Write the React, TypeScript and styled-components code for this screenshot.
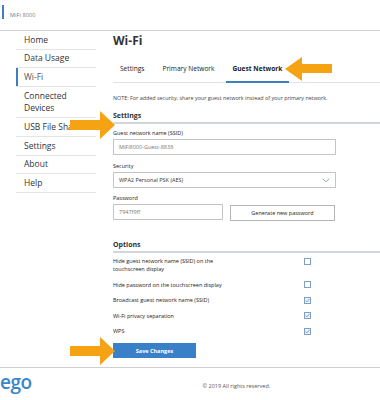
import React from 'react';
import styled, { createGlobalStyle } from 'styled-components';

const GlobalStyle = createGlobalStyle`
  html, body {
    margin: 0;
    padding: 0;
    background: #ffffff;
  }
  body {
    font-family: "Open Sans", "Liberation Sans", sans-serif;
    color: #333;
  }
`;

const Page = styled.div`
  position: relative;
  width: 380px;
  height: 400px;
  overflow: hidden;
`;

const TopBar = styled.div`
  height: 31px;
  box-sizing: border-box;
  border-bottom: 1px solid #d2d2d2;
  display: flex;
  align-items: flex-start;
  padding: 5px 0 0 2px;
`;

const BrandMark = styled.div`
  width: 2px;
  height: 14px;
  background: #3d7fc1;
`;

const BrandText = styled.div`
  margin: 7px 0 0 6px;
  font-size: 5.5px;
  line-height: 6px;
  color: #777;
  letter-spacing: 0.1px;
`;

const Body = styled.div`
  display: flex;
  align-items: flex-start;
`;

const SideNav = styled.nav`
  margin-left: 16px;
  width: 80px;
  flex-shrink: 0;
`;

const NavItem = styled.div<{ $active?: boolean }>`
  padding: 2.55px 0 2.55px 8px;
  font-size: 8.5px;
  line-height: 12.6px;
  color: ${(p) => (p.$active ? '#555' : '#333')};
  border-bottom: 1px solid #e4e4e4;
  box-shadow: ${(p) => (p.$active ? 'inset 2px 0 0 #3d7fc1' : 'none')};
`;

const Main = styled.main`
  margin-left: 17px;
  flex: 1;
  min-width: 0;
`;

const Title = styled.h1`
  margin: 3px 0 0;
  font-size: 12px;
  line-height: 14px;
  font-weight: 700;
  color: #333;
`;

const Tabs = styled.div`
  margin-top: 7px;
  height: 28px;
  box-sizing: border-box;
  display: flex;
  gap: 4px;
  border-bottom: 1px solid #e2e2e2;
`;

const Tab = styled.div<{ $active?: boolean }>`
  display: flex;
  align-items: center;
  padding: 1px 7px 0;
  font-size: 6.6px;
  font-weight: ${(p) => (p.$active ? 700 : 400)};
  color: #222;
  border-bottom: 2px solid ${(p) => (p.$active ? '#3d7fc1' : 'transparent')};
  margin-bottom: -1px;
`;

const Note = styled.p`
  margin: 11px 0 0;
  font-size: 5.4px;
  line-height: 8px;
  color: #444;
  white-space: nowrap;
`;

const SectionHead = styled.h2<{ $gap: number }>`
  margin: ${(p) => p.$gap}px 0 0;
  padding-bottom: 2px;
  font-size: 7px;
  line-height: 9px;
  font-weight: 700;
  color: #333;
  border-bottom: 2px solid #cfd6de;
`;

const Label = styled.div<{ $gap: number }>`
  margin-top: ${(p) => p.$gap}px;
  font-size: 5.5px;
  line-height: 7px;
  color: #222;
`;

const Field = styled.div<{ $width: number }>`
  margin-top: 2px;
  width: ${(p) => p.$width}px;
  height: 16px;
  box-sizing: border-box;
  border: 1px solid #c4c4c4;
  padding: 0 5px;
  display: flex;
  align-items: center;
  justify-content: space-between;
  font-size: 5.5px;
  color: #777;
`;

const SelectText = styled.span`
  color: #333;
`;

const PasswordRow = styled.div`
  display: flex;
  gap: 7px;
  align-items: flex-start;
`;

const GhostButton = styled.div`
  margin-top: 3px;
  width: 105px;
  height: 16px;
  box-sizing: border-box;
  border: 1px solid #b5b5b5;
  display: flex;
  align-items: center;
  justify-content: center;
  font-size: 5.5px;
  color: #222;
`;

const OptionRow = styled.div`
  display: grid;
  grid-template-columns: 191px 7px;
  align-items: start;
  padding: 4px 0 3.5px;
`;

const OptionLabel = styled.div`
  max-width: 120px;
  font-size: 5.5px;
  line-height: 8px;
  color: #222;
`;

const Box = styled.div<{ $checked?: boolean }>`
  width: 7px;
  height: 7px;
  margin-top: 0.5px;
  box-sizing: border-box;
  border: 1px solid #7f9fc4;
  background: ${(p) => (p.$checked ? '#e8f0f8' : '#fff')};
  display: flex;
  align-items: center;
  justify-content: center;
`;

const PrimaryButton = styled.div`
  margin-top: 4.5px;
  width: 83px;
  height: 15px;
  background: #3a80c8;
  color: #fff;
  font-size: 5.5px;
  font-weight: 700;
  display: flex;
  align-items: center;
  justify-content: center;
`;

const Footer = styled.footer`
  margin-top: 9px;
  border-top: 1px solid #cfcfcf;
  height: 33px;
  display: flex;
  align-items: flex-start;
`;

const Logo = styled.div`
  margin: 2px 0 0 0;
  font-size: 19px;
  line-height: 24px;
  font-weight: 600;
  color: #3b85c9;
  letter-spacing: -0.5px;
`;

const Copyright = styled.div`
  margin: 14px 0 0 171px;
  font-size: 5.5px;
  line-height: 8px;
  color: #555;
`;

const Pointer = styled.svg<{ $x: number; $y: number }>`
  position: absolute;
  left: ${(p) => p.$x}px;
  top: ${(p) => p.$y}px;
`;

const Check = () => (
  <svg width="5" height="5" viewBox="0 0 5 5">
    <path d="M0.6 2.6 L1.9 3.9 L4.4 1" fill="none" stroke="#6f92bb" strokeWidth="0.8" />
  </svg>
);

const ArrowRight = ({ x, y }: { x: number; y: number }) => (
  <Pointer $x={x} $y={y} width="46" height="28" viewBox="0 0 46 28">
    <polygon points="0,9 30,9 30,0 45,14 30,28 30,19 0,19" fill="#f6a313" />
  </Pointer>
);

const ArrowLeft = ({ x, y }: { x: number; y: number }) => (
  <Pointer $x={x} $y={y} width="48" height="24" viewBox="0 0 48 24">
    <polygon points="0,12 17,0 17,7 47,7 47,16 17,16 17,24" fill="#f6a313" />
  </Pointer>
);

const navItems = ['Home', 'Data Usage', 'Wi-Fi', 'Connected Devices', 'USB File Share', 'Settings', 'About', 'Help'];

const options = [
  { label: 'Hide guest network name (SSID) on the touchscreen display', checked: false },
  { label: 'Hide password on the touchscreen display', checked: false },
  { label: 'Broadcast guest network name (SSID)', checked: true },
  { label: 'Wi-Fi privacy separation', checked: true },
  { label: 'WPS', checked: true },
];

const App = () => {
  return (
    <>
      <GlobalStyle />
      <Page>
        <TopBar>
          <BrandMark />
          <BrandText>MiFi 8000</BrandText>
        </TopBar>
        <Body>
          <SideNav>
            {navItems.map((item) => (
              <NavItem key={item} $active={item === 'Wi-Fi'}>
                {item === 'Connected Devices' ? (
                  <>
                    Connected
                    <br />
                    Devices
                  </>
                ) : (
                  item
                )}
              </NavItem>
            ))}
          </SideNav>
          <Main>
            <Title>Wi-Fi</Title>
            <Tabs>
              <Tab>Settings</Tab>
              <Tab>Primary Network</Tab>
              <Tab $active>Guest Network</Tab>
            </Tabs>
            <Note>NOTE: For added security, share your guest network instead of your primary network.</Note>

            <SectionHead $gap={9}>Settings</SectionHead>
            <Label $gap={6}>Guest network name (SSID)</Label>
            <Field $width={223}>MiFi8000-Guest-8838</Field>
            <Label $gap={8}>Security</Label>
            <Field $width={223}>
              <SelectText>WPA2 Personal PSK (AES)</SelectText>
              <svg width="8" height="5" viewBox="0 0 8 5">
                <path d="M0.8 0.8 L4 3.8 L7.2 0.8" fill="none" stroke="#8aa8c8" strokeWidth="1" />
              </svg>
            </Field>
            <Label $gap={7}>Password</Label>
            <PasswordRow>
              <Field $width={110}>7947f9ff</Field>
              <GhostButton>Generate new password</GhostButton>
            </PasswordRow>

            <SectionHead $gap={19}>Options</SectionHead>
            {options.map((o) => (
              <OptionRow key={o.label}>
                <OptionLabel>{o.label}</OptionLabel>
                <Box $checked={o.checked}>{o.checked && <Check />}</Box>
              </OptionRow>
            ))}
            <PrimaryButton>Save Changes</PrimaryButton>
          </Main>
        </Body>
        <Footer>
          <Logo>ego</Logo>
          <Copyright>© 2019 All rights reserved.</Copyright>
        </Footer>

        <ArrowLeft x={285} y={57} />
        <ArrowRight x={70} y={111} />
        <ArrowRight x={70} y={337} />
      </Page>
    </>
  );
};

export default App;
